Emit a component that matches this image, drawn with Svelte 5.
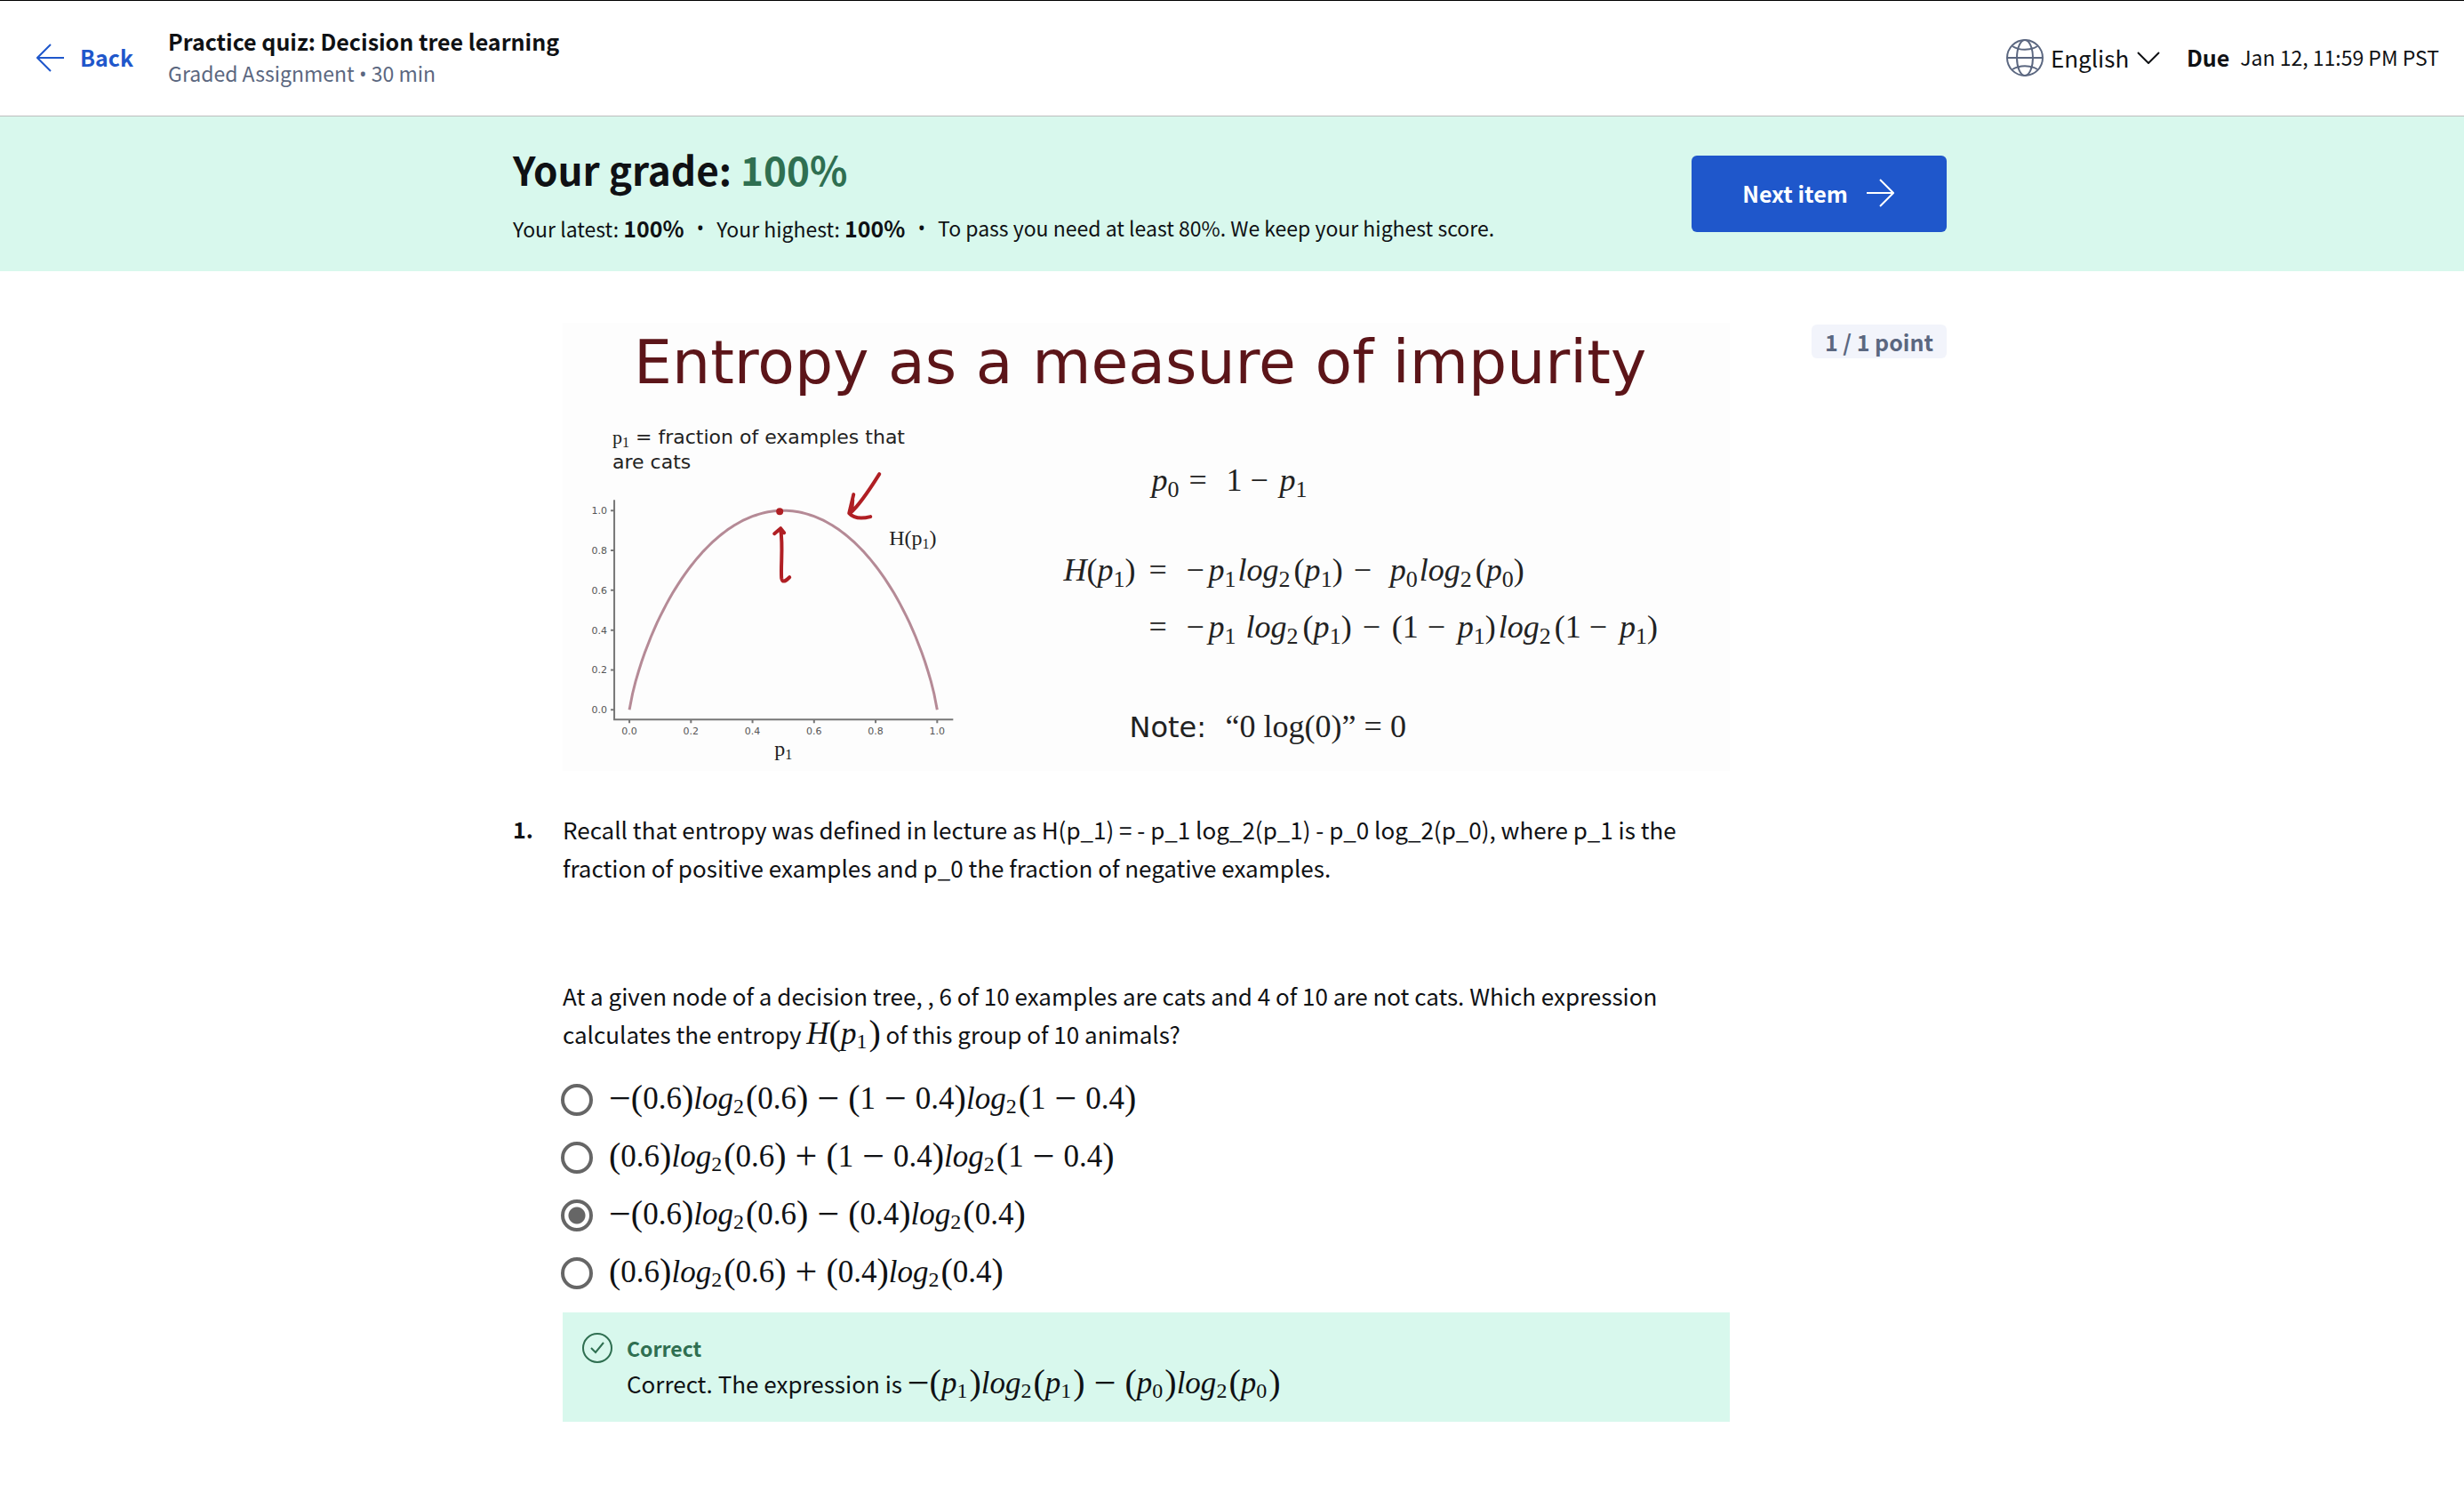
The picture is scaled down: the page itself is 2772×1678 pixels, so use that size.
<script>
  const options = [
    '−(0.6)log_2(0.6) − (1 − 0.4)log_2(1 − 0.4)',
    '(0.6)log_2(0.6) + (1 − 0.4)log_2(1 − 0.4)',
    '−(0.6)log_2(0.6) − (0.4)log_2(0.4)',
    '(0.6)log_2(0.6) + (0.4)log_2(0.4)'
  ];
  let selected = $state(2);

  // Splits a formula into letters, digits, brackets, operators and subscripts.
  function tokens(source) {
    const found = source.match(/_\d|\s[−+]\s|[a-zA-Z]+|[\d.]+|[()]|[−+=]/g) ?? [];
    return found.map((part) => {
      if (part[0] === '_') return { kind: 'sub', text: part.slice(1) };
      if (/^\s[−+]\s$/.test(part)) return { kind: 'binary', text: part.trim() };
      if (/^[a-zA-Z]+$/.test(part)) return { kind: 'letter', text: part };
      if (/^[()]$/.test(part)) return { kind: 'bracket', text: part };
      if (/^[−+=]$/.test(part)) return { kind: 'sign', text: part };
      return { kind: 'digits', text: part };
    });
  }

  // The same tokens for SVG text, with the baseline shift each one needs.
  function slideTokens(source) {
    let low = false;
    return tokens(source).map((t) => {
      const sub = t.kind === 'sub';
      const dy = sub === low ? 0 : sub ? 7 : -7;
      low = sub;
      return { ...t, dy };
    });
  }

  // Formula rows on the slide: a baseline and the terms along it.
  const rows = [
    { y: 189, terms: [[662, 'p_0'], [704, '='], [746, '1'], [773, '−'], [806, 'p_1']] },
    {
      y: 290,
      terms: [[563, 'H(p_1)'], [659, '='], [701, '−'], [726, 'p_1'], [759, 'log_2'], [822, '(p_1)'], [889, '−'], [930, 'p_0'], [963, 'log_2'], [1026, '(p_0)']]
    },
    {
      y: 354,
      terms: [[659, '='], [701, '−'], [726, 'p_1'], [768, 'log_2'], [832, '(p_1)'], [899, '−'], [932, '(1'], [972, '−'], [1006, 'p_1)'], [1052, 'log_2'], [1115, '(1'], [1154, '−'], [1188, 'p_1)']]
    }
  ];

  const ticks = [0, 0.2, 0.4, 0.6, 0.8, 1];
  const px = (v) => 75 + v * 346;
  const py = (v) => 435 - v * 224;
  const entropy = (p) => (p <= 0 || p >= 1 ? 0 : -p * Math.log2(p) - (1 - p) * Math.log2(1 - p));
  const curve = Array.from({ length: 101 }, (_, i) => `${px(i / 100).toFixed(1)},${py(entropy(i / 100)).toFixed(1)}`).join(' ');
</script>

{#snippet math(source)}
  <span class="math">{#each tokens(source) as t}<span class={t.kind}>{t.text}</span>{/each}</span>
{/snippet}

<div class="page">
  <header class="topbar">
    <a class="back" href="#back">
      <svg width="32" height="32" viewBox="0 0 32 32" fill="none" stroke="currentColor" stroke-width="2"><path d="M16 1 1 16l15 15M1 16h30" /></svg>
      Back
    </a>
    <div class="titles">
      <h2>Practice quiz: Decision tree learning</h2>
      <p>Graded Assignment <span class="dot">•</span> 30 min</p>
    </div>
    <label class="language">
      <svg class="globe" width="42" height="42" viewBox="0 0 42 42" fill="none" stroke="currentColor" stroke-width="2">
        <circle cx="21" cy="21" r="20" />
        <ellipse cx="21" cy="21" rx="9" ry="20" />
        <path d="M1 21h40M7 8c8 5 20 5 28 0M7 34c8-5 20-5 28 0" />
      </svg>
      <select aria-label="Language"><option>English</option></select>
      <svg width="26" height="14" viewBox="0 0 26 14" fill="none" stroke="currentColor" stroke-width="2"><path d="m1 1 12 12L25 1" /></svg>
    </label>
    <p class="due"><strong>Due</strong><span>Jan 12, 11:59 PM PST</span></p>
  </header>

  <section class="banner">
    <div class="inner">
      <div class="grade">
        <h1>Your grade: <span>100%</span></h1>
        <p class="stats">
          <span>Your latest: <strong>100%</strong></span>
          <span class="dot">•</span>
          <span>Your highest: <strong>100%</strong></span>
          <span class="dot">•</span>
          <span>To pass you need at least 80%. We keep your highest score.</span>
        </p>
      </div>
      <button class="next" type="button">
        Next item
        <svg width="32" height="32" viewBox="0 0 32 32" fill="none" stroke="currentColor" stroke-width="2"><path d="m16 1 15 15-15 15M31 16H1" /></svg>
      </button>
    </div>
  </section>

  <main class="inner question">
    <svg class="slide" viewBox="0 0 1312 504" role="img" aria-label="Entropy as a measure of impurity">
      <rect width="1312" height="504" fill="#fdfdfd" />
      <text class="slide-title" x="80" y="68">Entropy as a measure of impurity</text>
      <text class="caption" x="56" y="136"><tspan class="serif">p</tspan><tspan class="serif small" dy="4">1</tspan><tspan dy="-4">&nbsp;= fraction of examples that</tspan></text>
      <text class="caption" x="56" y="164">are cats</text>
      <path class="axis" d="M58 199v247h381" />
      {#each ticks as t}
        <path class="axis" d="M58 {py(t)}h-4M{px(t)} 446v4" />
        <text class="tick end" x="50" y={py(t) + 4}>{t.toFixed(1)}</text>
        <text class="tick mid" x={px(t)} y="463">{t.toFixed(1)}</text>
      {/each}
      <polyline points={curve} fill="none" stroke="#b58a96" stroke-width="3" />
      <text class="serif label" x="238" y="487">p<tspan class="small" dy="4">1</tspan></text>
      <text class="serif label" x="367" y="250">H(p<tspan class="small" dy="4">1</tspan><tspan dy="-4">)</tspan></text>
      <g class="ink">
        <ellipse cx="244" cy="212" rx="2" ry="2" />
        <path d="M356 170C346 186 334 205 323 214M327 193 322 214C328 221 338 220 346 218M326 199 325 211" />
        <path d="M238 237 245 231 249 236M245 232C248 251 245 272 246 287 247 293 251 290 255 286" />
      </g>
      {#each rows as row}
        {#each row.terms as [x, source]}
          <text class="formula" {x} y={row.y}>{#each slideTokens(source) as t}<tspan class={t.kind} dy={t.dy}>{t.text}</tspan>{/each}</text>
        {/each}
      {/each}
      <text class="note" x="637" y="466">Note:</text>
      <text class="formula" x="745" y="466">“0 log(0)” = 0</text>
    </svg>
    <div class="points"><span>1 / 1 point</span></div>

    <strong class="ordinal">1.</strong>
    <div class="body">
      <p>Recall that entropy was defined in lecture as H(p_1) = - p_1 log_2(p_1) - p_0 log_2(p_0), where p_1 is the fraction of positive examples and p_0 the fraction of negative examples.</p>
      <p class="prompt">At a given node of a decision tree, , 6 of 10 examples are cats and 4 of 10 are not cats. Which expression calculates the entropy {@render math('H(p_1)')} of this group of 10 animals?</p>

      <div class="options" role="radiogroup" aria-label="Answers">
        {#each options as option, i}
          <label>
            <input type="radio" name="answer" value={i} bind:group={selected} />
            {@render math(option)}
          </label>
        {/each}
      </div>

      <div class="feedback">
        <svg width="36" height="36" viewBox="0 0 36 36" fill="none" stroke="currentColor" stroke-width="2"><circle cx="18" cy="18" r="16" /><path d="m11 18 5 5 9-11" /></svg>
        <div>
          <strong>Correct</strong>
          <p>Correct. The expression is {@render math('−(p_1)log_2(p_1) − (p_0)log_2(p_0)')}</p>
        </div>
      </div>
    </div>
  </main>
</div>

<style>
  :global(body) {
    margin: 0;
    background: #fff;
  }
  .page {
    min-height: 100vh;
    box-sizing: border-box;
    border-top: 1px solid #000;
    color: #0f1114;
    font: 400 26px/43px 'Noto Sans CJK SC', 'Noto Sans', sans-serif;
  }
  h1, h2, p { margin: 0; }
  svg { flex: none; }
  .dot { font-family: 'Open Sans', sans-serif; line-height: 0; }

  .topbar {
    box-sizing: border-box;
    display: flex;
    align-items: center;
    height: 130px;
    padding: 0 28px 2px 41px;
    border-bottom: 1px solid #bdbdbd;
  }
  .back {
    display: flex;
    align-items: center;
    gap: 17px;
    color: #1f57cb;
    font-size: 25px;
    font-weight: 700;
    text-decoration: none;
  }
  .titles { margin-left: 39px; padding-bottom: 2px; }
  .titles h2 { font-size: 25px; line-height: 36px; font-weight: 700; }
  .titles p { color: #5b6780; font-size: 23px; line-height: 36px; }
  .language {
    display: flex;
    align-items: center;
    gap: 8px;
    margin-left: auto;
  }
  .globe { color: #5b6780; }
  select {
    appearance: none;
    border: 0;
    padding: 0;
    background: none;
    color: inherit;
    font: inherit;
  }
  .due {
    display: flex;
    align-items: center;
    gap: 12px;
    margin-left: 30px;
  }
  .due strong { font-size: 25px; }
  .due span { font-size: 23px; }

  .banner { background: #d8f8ed; }
  .inner {
    max-width: 1613px;
    margin: 0 auto;
    padding-right: 5px;
  }
  .banner .inner {
    display: flex;
    align-items: center;
    justify-content: space-between;
    height: 174px;
  }
  .grade { padding-bottom: 2px; }
  h1 { font-size: 44px; line-height: 72px; font-weight: 700; }
  h1 span { color: #2f6f51; }
  .stats {
    display: flex;
    gap: 14px;
    margin-top: 6px;
    font-size: 23px;
    line-height: 48px;
  }
  .stats .dot { line-height: 48px; }
  .stats strong { font-size: 25px; }
  .next {
    display: flex;
    align-items: center;
    justify-content: center;
    gap: 20px;
    width: 287px;
    height: 86px;
    padding: 0 2px 2px 0;
    border: 0;
    border-radius: 6px;
    background: #1f57cb;
    color: #fff;
    font: inherit;
    font-size: 25px;
    font-weight: 700;
  }

  .question {
    display: grid;
    grid-template-columns: 56px minmax(0, 1313px) 1fr;
    padding-top: 58px;
  }
  .slide {
    grid-column: 2;
    width: 100%;
    height: auto;
  }
  .points {
    display: flex;
    align-items: flex-start;
    justify-content: flex-end;
    margin-top: 2px;
  }
  .points span {
    padding: 0 15px;
    border-radius: 6px;
    background: #f2f4fb;
    color: #5b6780;
    font-size: 25px;
    font-weight: 700;
    line-height: 38px;
    white-space: nowrap;
  }
  .ordinal, .body { margin-top: 44px; }
  .ordinal { grid-column: 1; font-size: 25px; }
  .prompt { margin-top: 101px; }

  .math {
    font-family: 'Liberation Serif', serif;
    font-size: 35px;
    line-height: 0;
    white-space: nowrap;
  }
  .math .letter { font-style: italic; }
  .math .bracket { font-size: 40px; vertical-align: -1px; }
  .math .sub { font-size: 24px; vertical-align: -5px; margin-right: 2px; }
  .math .sign, .math .binary { font-size: 44px; vertical-align: -3px; }
  .math .binary { margin: 0 10px; }

  .options { margin-top: 20px; }
  .options label {
    display: flex;
    align-items: center;
    gap: 18px;
    height: 65px;
  }
  .options .math { padding-top: 6px; }
  input[type='radio'] {
    appearance: none;
    width: 36px;
    height: 36px;
    margin: 0 0 0 -2px;
    border: 4px solid #666;
    border-radius: 50%;
  }
  input[type='radio']:checked { background: radial-gradient(circle, #666 9px, #fff 10px); }

  .feedback {
    display: flex;
    gap: 15px;
    margin-top: 12px;
    padding: 22px 21px;
    background: #d8f8ed;
  }
  .feedback svg, .feedback strong { color: #2f6f51; }
  .feedback strong {
    display: block;
    font-size: 23px;
    line-height: 36px;
  }

  .slide text {
    font-family: 'DejaVu Sans', sans-serif;
    fill: #222;
  }
  .slide .slide-title { font-size: 68px; fill: #5c1519; }
  .slide .caption { font-size: 22px; }
  .slide .tick { font-size: 11px; fill: #555; }
  .slide .end { text-anchor: end; }
  .slide .mid { text-anchor: middle; }
  .slide .serif, .slide .formula { font-family: 'Liberation Serif', serif; }
  .slide .label { font-size: 24px; }
  .slide .small { font-size: 16px; }
  .slide .formula { font-size: 36px; }
  .slide .formula .letter { font-style: italic; }
  .slide .formula .sub { font-size: 26px; }
  .slide .note { font-size: 32px; }
  .axis { fill: none; stroke: #777; stroke-width: 2; }
  .ink { fill: none; stroke: #b01f24; stroke-width: 4; stroke-linecap: round; stroke-linejoin: round; }
</style>
